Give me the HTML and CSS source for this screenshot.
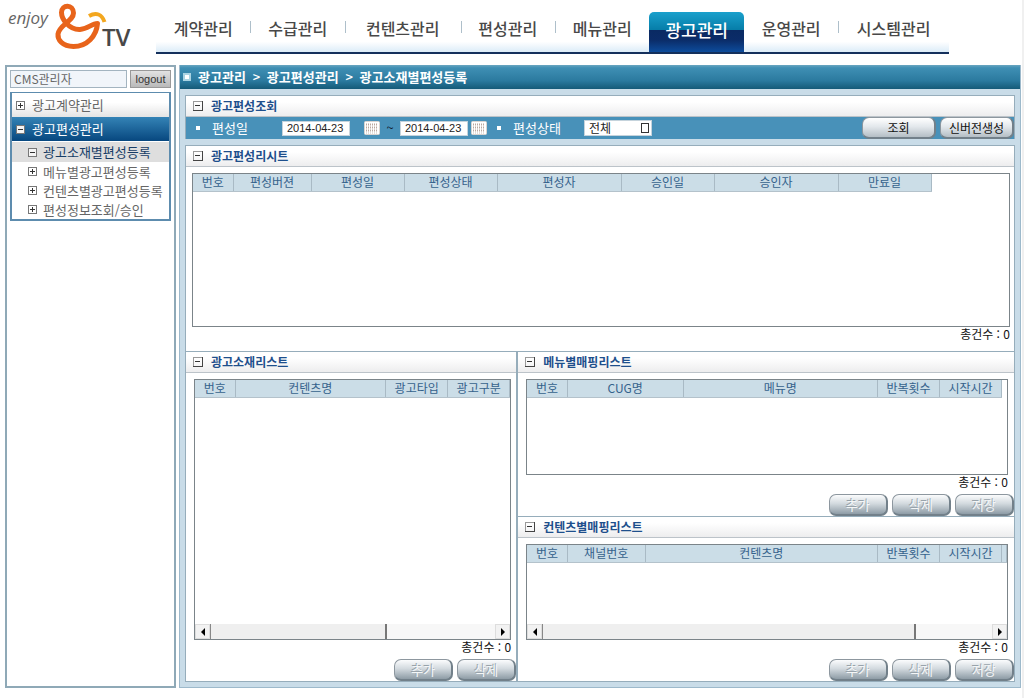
FILE: index.html
```html
<!DOCTYPE html>
<html lang="ko">
<head>
<meta charset="utf-8">
<meta name="viewport" content="width=device-width, initial-scale=1">
<title>광고소재별편성등록</title>
<link rel="stylesheet" href="styles.css">
</head>
<body>
<svg class="defs" width="0" height="0" aria-hidden="true">
  <symbol id="plus" viewBox="0 0 9 9"><rect x=".5" y=".5" width="8" height="8" fill="#fff" stroke="#777"/><path d="M2 4.5h5M4.5 2v5" stroke="#333"/></symbol>
  <symbol id="minus" viewBox="0 0 9 9"><rect x=".5" y=".5" width="8" height="8" fill="#f4f4f4" stroke="#777"/><path d="M2 4.5h5" stroke="#333"/></symbol>
  <symbol id="fold" viewBox="0 0 10 10"><path d="M0 .5h9M.5 0v9" stroke="#999"/><path d="M0 9.5h10M9.5 0v10" stroke="#444"/><path d="M2 4.5h5" stroke="#333"/></symbol>
  <symbol id="calendar" viewBox="0 0 16 14"><rect x=".5" y=".5" width="15" height="13" rx="1" fill="#fff" stroke="#d9d4d0"/><path d="M2 3.5h12M2 6.5h12M2 9.5h12" stroke="#b9a79e" stroke-width="2" stroke-dasharray="1 1"/><path d="M2 12h12" stroke="#c9beb8" stroke-dasharray="1 1"/></symbol>
</svg>
<div class="page">
  <header class="top">
    <a class="logo" href="#" aria-label="enjoy &amp; TV">
      <svg width="140" height="54" viewBox="0 0 140 54">
        <text class="logo-enjoy" x="8" y="24">enjoy</text>
        <path d="M97.500 23.500C96.500 36 87 46.500 73.500 46.500C62 46.500 57.500 39.500 58 34C59 25 73.500 21 73.500 13C73.500 4 61.500 4 61.500 12.500C61.500 19 69 30 80 29.500C88 29 91.500 23.500 97.500 23.500Z" fill="none" stroke="#e8641b" stroke-width="5" stroke-linejoin="round"/>
        <path d="M89 16C96 12 102 14 104.500 22" fill="none" stroke="#f3a71f" stroke-width="4"/>
        <text class="logo-tv" x="102" y="46">TV</text>
      </svg>
    </a>
    <nav class="nav">
      <a href="#">계약관리</a>
      <a class="bar" href="#">수급관리</a>
      <a class="bar wide" href="#">컨텐츠관리</a>
      <a class="bar" href="#">편성관리</a>
      <a class="bar" href="#">메뉴관리</a>
      <a class="active" href="#">광고관리</a>
      <a href="#">운영관리</a>
      <a class="bar last" href="#">시스템관리</a>
    </nav>
  </header>
  <div class="body">
    <aside class="side">
      <form class="user">
        <input class="user-name" type="text" value="CMS관리자" aria-label="사용자" readonly>
        <button class="logout" type="button">logout</button>
      </form>
      <ul class="menu">
        <li><a class="group" href="#"><svg class="ico"><use href="#plus"/></svg>광고계약관리</a></li>
        <li><a class="group open" href="#"><svg class="ico"><use href="#minus"/></svg>광고편성관리</a>
          <ul class="sub">
            <li><a class="current" href="#"><svg class="ico"><use href="#minus"/></svg>광고소재별편성등록</a></li>
            <li><a href="#"><svg class="ico"><use href="#plus"/></svg>메뉴별광고편성등록</a></li>
            <li><a href="#"><svg class="ico"><use href="#plus"/></svg>컨텐츠별광고편성등록</a></li>
            <li><a href="#"><svg class="ico"><use href="#plus"/></svg>편성정보조회/승인</a></li>
          </ul>
        </li>
      </ul>
    </aside>
    <main class="main">
      <div class="crumbs"><i class="crumb-dot"></i><span>광고관리</span><b>&gt;</b><span>광고편성관리</span><b>&gt;</b><span>광고소재별편성등록</span></div>
      <div class="content">
        <section class="panel filter">
          <h2 class="title"><svg class="fold"><use href="#fold"/></svg>광고편성조회</h2>
          <form class="search">
            <label class="field date" for="from">편성일</label>
            <input class="text" id="from" type="text" value="2014-04-23">
            <button class="cal first" type="button" aria-label="시작일 달력"><svg><use href="#calendar"/></svg></button>
            <span class="tilde">~</span>
            <input class="text" type="text" value="2014-04-23" aria-label="종료일">
            <button class="cal" type="button" aria-label="종료일 달력"><svg><use href="#calendar"/></svg></button>
            <label class="field state" for="state">편성상태</label>
            <span class="select"><select id="state"><option>전체</option></select><i></i></span>
            <span class="actions">
              <button class="btn big" type="button">조회</button>
              <button class="btn big" type="button">신버전생성</button>
            </span>
          </form>
        </section>
        <div class="panel lists">
          <section class="block">
            <h2 class="title"><svg class="fold"><use href="#fold"/></svg>광고편성리시트</h2>
            <div class="grid history">
              <table class="fit">
                <colgroup><col class="w40"><col class="w78"><col class="w93"><col class="w93"><col class="w124"><col class="w93"><col class="w124"><col class="w93"></colgroup>
                <thead><tr><th>번호</th><th>편성버젼</th><th>편성일</th><th>편성상태</th><th>편성자</th><th>승인일</th><th>승인자</th><th>만료일</th></tr></thead>
              </table>
            </div>
            <p class="count history-count">총건수 : 0</p>
          </section>
          <div class="lower">
            <section class="block left">
              <h2 class="title"><svg class="fold"><use href="#fold"/></svg>광고소재리스트</h2>
              <div class="grid">
                <table>
                  <colgroup><col class="w40"><col><col class="w62"><col class="w62"></colgroup>
                  <thead><tr><th>번호</th><th>컨텐츠명</th><th>광고타입</th><th>광고구분</th></tr></thead>
                </table>
                <div class="scroll"><button type="button" aria-label="왼쪽"><svg viewBox="0 0 4 8"><path d="M4 0v8L0 4z"/></svg></button><div class="track"><div class="thumb" style="width:62%"></div></div><button type="button" aria-label="오른쪽"><svg viewBox="0 0 4 8"><path d="M0 0v8l4-4z"/></svg></button></div>
              </div>
              <p class="count">총건수 : 0</p>
              <div class="buttons"><button class="btn" type="button" disabled>추가</button><button class="btn" type="button" disabled>삭제</button></div>
            </section>
            <div class="right">
              <section class="block">
                <h2 class="title"><svg class="fold"><use href="#fold"/></svg>메뉴별매핑리스트</h2>
                <div class="grid">
                  <table class="inset">
                    <colgroup><col class="w40"><col class="w116"><col><col class="w62"><col class="w62"></colgroup>
                    <thead><tr><th>번호</th><th>CUG명</th><th>메뉴명</th><th>반복횟수</th><th>시작시간</th></tr></thead>
                  </table>
                </div>
                <p class="count">총건수 : 0</p>
                <div class="buttons"><button class="btn" type="button" disabled>추가</button><button class="btn" type="button" disabled>삭제</button><button class="btn" type="button" disabled>저장</button></div>
              </section>
              <section class="block">
                <h2 class="title"><svg class="fold"><use href="#fold"/></svg>컨텐츠별매핑리스트</h2>
                <div class="grid">
                  <table>
                    <colgroup><col class="w40"><col class="w78"><col><col class="w62"><col class="w62"><col class="w5"></colgroup>
                    <thead><tr><th>번호</th><th>채널번호</th><th>컨텐츠명</th><th>반복횟수</th><th>시작시간</th><th></th></tr></thead>
                  </table>
                  <div class="scroll"><button type="button" aria-label="왼쪽"><svg viewBox="0 0 4 8"><path d="M4 0v8L0 4z"/></svg></button><div class="track"><div class="thumb" style="width:83%"></div></div><button type="button" aria-label="오른쪽"><svg viewBox="0 0 4 8"><path d="M0 0v8l4-4z"/></svg></button></div>
                </div>
                <p class="count">총건수 : 0</p>
                <div class="buttons"><button class="btn" type="button" disabled>추가</button><button class="btn" type="button" disabled>삭제</button><button class="btn" type="button" disabled>저장</button></div>
              </section>
            </div>
          </div>
        </div>
      </div>
    </main>
  </div>
</div>
</body>
</html>
```
FILE: styles.css
```css
* { box-sizing: border-box; }
body, h2, p, ul, form { margin: 0; padding: 0; }
body, button, input, select {
  font-family: "Noto Sans CJK KR", "Liberation Sans", sans-serif;
  font-size: 13px;
  line-height: 18px;
}
body { background: #fff; color: #222; }
ul { list-style: none; }
a { color: inherit; text-decoration: none; }
.defs { position: absolute; }
.page {
  display: flex;
  flex-direction: column;
  min-height: 100vh;
  padding: 0 1px 10px 5px;
  border-right: 2px solid #f0f0f0;
}

/* header */
.top { display: flex; height: 54px; margin-bottom: 11px; }
.logo { flex: none; width: 151px; margin-left: -5px; }
.logo svg { display: block; }
.logo-enjoy { font: italic 17px "Open Sans", sans-serif; fill: #666; }
.logo-tv { font: 600 24px "Open Sans", sans-serif; fill: #484848; }
.nav {
  display: flex;
  flex: 1;
  margin: 0 72px 0 5px;
  padding-top: 12px;
  border-bottom: 2px solid #14305c;
  background: linear-gradient(#fff 80%, #dcecf8);
}
.nav a {
  display: flex;
  flex: 94 1 0;
  align-items: center;
  justify-content: center;
  padding-bottom: 9px;
  color: #484848;
  font-size: 16px;
  font-weight: 500;
  white-space: nowrap;
}
.nav a.wide { flex-grow: 115; }
.nav a.last { flex-grow: 110; }
.nav a.bar {
  background: linear-gradient(#aebfca, #aebfca) 0 9px / 1px 12px no-repeat;
}
.nav a.active {
  padding-bottom: 4px;
  border-radius: 5px 5px 0 0;
  background: linear-gradient(#1aa0cc, #067da8 45%, #0a2a63 46%, #0b2c68 70%, #0d4c9c);
  color: #fff;
  font-size: 17px;
}

/* sidebar */
.body { display: flex; flex: 1; gap: 3px; }
.side {
  flex: none;
  width: 171px;
  padding: 3px;
  border: 2px solid #8fa9b7;
}
.user { display: flex; gap: 3px; margin-bottom: 4px; }
.user-name {
  flex: 1;
  min-width: 0;
  height: 18px;
  padding: 0 3px;
  border: 1px solid #a3b4c0;
  background: #f1f5fa;
  color: #666;
  font-size: 12px;
}
.logout {
  width: 41px;
  height: 18px;
  padding: 0;
  border: 1px solid #999;
  background: linear-gradient(#e2e2e2, #b9b9b9);
  color: #333;
  font: 11px "Liberation Sans", sans-serif;
}
.menu { border: 2px solid #5d8cae; border-top-width: 1px; }
.menu a { display: flex; align-items: center; color: #666; white-space: nowrap; }
.ico { flex: none; width: 9px; height: 9px; }
.group { height: 24px; gap: 7px; padding-left: 4px; background: linear-gradient(#fff 40%, #e4e4e4); }
.menu .open { background: linear-gradient(#3483b6, #07477f); color: #fff; }
.sub { padding-top: 1px; }
.sub a { height: 19px; gap: 6px; padding-left: 16px; }
.sub .current { height: 20px; background: #dedede; color: #173d66; }

/* main frame */
.main {
  display: flex;
  flex: 1;
  flex-direction: column;
  min-width: 0;
  border: 1px solid #9db9cb;
  border-top: 0;
  background: #c9dce8;
}
.crumbs {
  display: flex;
  align-items: center;
  height: 24px;
  padding-left: 3px;
  background: linear-gradient(#6aa6c0, #3f8fb4 12%, #2b7a9f 65%, #155a78);
  color: #fff;
  font-weight: bold;
}
.crumb-dot { width: 8px; height: 8px; margin-right: 7px; border: 2px solid #a9d3e2; background: #fff; }
.crumbs b { width: 21px; font-weight: 500; text-align: center; }
.content { display: flex; flex: 1; flex-direction: column; gap: 6px; padding: 6px 5px 5px; }
.panel { border: 1px solid #96adbb; background: #fff; }
.filter { border-bottom: 0; }
.title {
  display: flex;
  align-items: center;
  height: 21px;
  gap: 8px;
  padding-left: 7px;
  border-bottom: 1px solid #bcc3c9;
  background: linear-gradient(#fff 30%, #ededee);
  color: #1e4f8c;
  font-size: 12px;
  font-weight: bold;
}
.fold { flex: none; width: 10px; height: 10px; }

/* search bar */
.search { display: flex; align-items: center; height: 22px; background: #4891b9; }
.field { display: flex; flex: none; align-items: center; color: #fff; white-space: nowrap; }
.field::before { width: 4px; height: 4px; margin: 0 12px 0 10px; background: #fff; content: ""; }
.field.date { width: 96px; }
.field.state { width: 97px; }
.text {
  width: 68px;
  height: 15px;
  padding: 0 4px;
  border: 1px solid #c5d3dc;
  background: #fff;
  color: #222;
  font: 11px "Liberation Sans", sans-serif;
}
.cal { width: 16px; height: 14px; margin-left: 3px; padding: 0; border: 0; background: none; }
.cal.first { margin-left: 14px; }
.cal svg { display: block; width: 16px; height: 14px; }
.tilde { width: 20px; color: #123; text-align: center; }
.select { position: relative; display: flex; }
.select select {
  width: 68px;
  height: 16px;
  padding: 0 4px;
  border: 1px solid #c5d3dc;
  border-radius: 0;
  background: #fff;
  color: #222;
  font-size: 12px;
  line-height: 14px;
  appearance: none;
}
.select i { position: absolute; top: 3px; right: 3px; width: 8px; height: 10px; border: 1px solid #333; pointer-events: none; }
.actions { display: flex; gap: 4px; margin-left: auto; }
.btn {
  width: 59px;
  height: 22px;
  padding: 0;
  border: 1px solid #8d979f;
  border-right: 2px solid #72808a;
  border-bottom: 2px solid #72808a;
  border-radius: 7px;
  background: linear-gradient(#fff, #e3e8ec 45%, #b4bec5);
  color: #111;
  line-height: 18px;
}
.btn.big { width: 74px; font-size: 12px; }
.btn:disabled { background: linear-gradient(#fbfcfd, #d3dadf 45%, #8e9ca6); color: #f4f6f7; text-shadow: -1px -1px 0 #98a3ab; }

/* lists */
.lists { display: flex; flex: 1; flex-direction: column; }
.block { display: flex; flex: 1; flex-direction: column; min-width: 0; }
.lists > .block { flex: none; }
.lower { display: grid; flex: 1; grid-template-columns: 2fr 3fr; border-top: 1px solid #96adbb; }
.left { border-right: 1px solid #96adbb; }
.right { display: flex; flex-direction: column; border-left: 1px solid #96adbb; }
.right .block + .block { border-top: 1px solid #96adbb; }
.grid {
  display: flex;
  flex: 1;
  flex-direction: column;
  justify-content: space-between;
  margin: 6px 5px 0 8px;
  border: 1px solid #7b8489;
}
.right .grid { margin-right: 6px; }
.grid.history { flex: none; min-height: 154px; margin: 6px 4px 0 6px; }
table { width: 100%; border-collapse: collapse; table-layout: fixed; }
table.fit { width: 0; }
table.inset { width: calc(100% - 5px); }
th {
  height: 17px;
  padding: 0;
  border-right: 1px solid #a9bac5;
  border-bottom: 1px solid #b4c2cb;
  background: #cbdde7;
  color: #35628c;
  font-size: 12px;
  font-weight: normal;
  line-height: 16px;
  white-space: nowrap;
}
.w5 { width: 5px; }
.w40 { width: 40px; }
.w62 { width: 62px; }
.w78 { width: 78px; }
.w93 { width: 93px; }
.w116 { width: 116px; }
.w124 { width: 124px; }
.count { height: 14px; padding-right: 5px; color: #111; font-size: 12px; line-height: 14px; text-align: right; }
.right .count { padding-right: 6px; }
.history-count { height: 24px; padding-right: 4px; }
.buttons { display: flex; justify-content: flex-end; gap: 4px; padding-top: 5px; }

/* scroll bar */
.scroll { display: flex; height: 15px; background: #f7f7f7; }
.scroll button {
  display: grid;
  place-items: center;
  width: 15px;
  padding: 0;
  border: 1px solid #ddd;
  background: #f2f2f2;
}
.scroll svg { width: 4px; height: 8px; }
.track { display: flex; flex: 1; }
.thumb { border-right: 2px solid #777; border-left: 1px solid #888; background: #efefef; }
```
